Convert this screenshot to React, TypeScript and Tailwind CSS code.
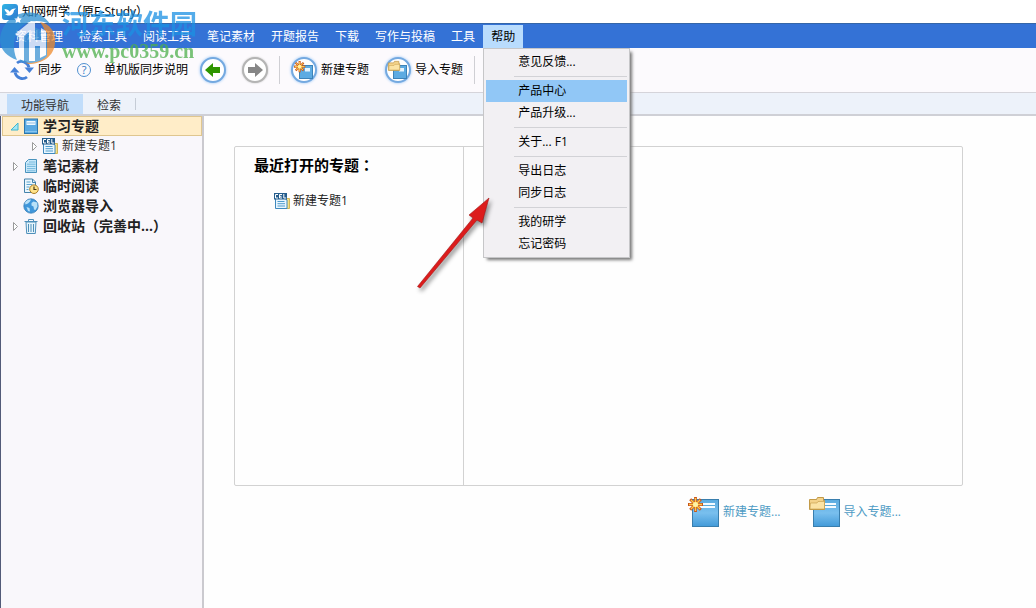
import { useState } from "react";
import type { ReactNode } from "react";

type MenuEntry = { label: string } | "separator";

const MENUS = ["资料管理", "检索工具", "阅读工具", "笔记素材", "开题报告", "下载", "写作与投稿", "工具"];

const HELP_MENU: MenuEntry[] = [
  { label: "意见反馈..." },
  "separator",
  { label: "产品中心" },
  { label: "产品升级..." },
  "separator",
  { label: "关于... F1" },
  "separator",
  { label: "导出日志" },
  { label: "同步日志" },
  "separator",
  { label: "我的研学" },
  { label: "忘记密码" },
];

function AppIcon() {
  return (
    <svg width="16" height="16" viewBox="0 0 16 16" aria-hidden="true">
      <defs>
        <linearGradient id="app-icon" x2="1" y2="1">
          <stop stopColor="#2fb5e4" />
          <stop offset="1" stopColor="#2f74d0" />
        </linearGradient>
      </defs>
      <rect width="16" height="16" rx="3" fill="url(#app-icon)" />
      <path d="M2.500 5c2.500.2 4 1 5.200 2.700C9 5.200 11 4.300 14 4.500l-2 1.700c-.3 3.500-2.500 5.300-5 5.300-1.800 0-3-.6-4-1.500 1.200 0 2-.2 2.500-.8C4 8.500 3 7 2.500 5z" fill="#fff" />
    </svg>
  );
}

function SyncIcon() {
  return (
    <svg width="24" height="22" viewBox="0 0 24 22" aria-hidden="true">
      <g fill="none" stroke="#4580d8" strokeWidth="2.800">
        <path d="M7 4C11 .8 17.500 2.500 19 8.500" />
        <path d="M17 18C13 21.200 6.500 19.500 5 13.500" />
      </g>
      <path d="M14.500 8.500h9.500L19.500 14z" fill="#4580d8" />
      <path d="M0 13.500h9.500L4.500 8z" fill="#4580d8" />
    </svg>
  );
}

function ArrowIcon({ back }: { back?: boolean }) {
  return (
    <svg width="16" height="14" viewBox="0 0 16 14" aria-hidden="true">
      {back ? (
        <path d="M0 7l8-7v4h7v6H8v4z" fill="#2e9500" />
      ) : (
        <path d="M16 7L8 0v4H1v6h7v4z" fill="#868686" />
      )}
    </svg>
  );
}

function BookIcon() {
  return (
    <svg width="16" height="16" viewBox="0 0 16 16" aria-hidden="true">
      <rect x="1.500" y="1" width="13" height="14.500" fill="#5aa9e2" stroke="#2d77ad" />
      <rect x="3.500" y="3" width="9" height="4" fill="#eef8ff" />
      <path d="M4 5h8" stroke="#6aa8d6" strokeWidth=".7" />
      <path d="M2 13.500h12" stroke="#9ed2f5" strokeWidth=".7" />
    </svg>
  );
}

function Spark() {
  return (
    <g>
      <path d="M7.500 0v15M0 7.500h15M2.200 2.200l10.600 10.600M12.800 2.200L2.200 12.800" stroke="#c8551c" strokeWidth="2.800" />
      <path d="M7.500 1v13M1 7.500h13M3 3l9 9M12 3l-9 9" stroke="#ffc94a" strokeWidth="1.400" />
      <circle cx="7.500" cy="7.500" r="2.500" fill="#fff3a5" />
    </g>
  );
}

function Folder() {
  return (
    <g stroke="#c39a48">
      <path d="M.5 2.500h7l1-2h6v3h1v9H.5z" fill="#f3d28a" />
      <path d="M1 12l.5-6h6.500l1-1.500h6.500V12z" fill="#fbe3a4" strokeWidth=".6" />
    </g>
  );
}

function TopicIcon({ kind }: { kind: "new" | "import" }) {
  return (
    <svg width="32" height="32" viewBox="0 0 32 32" aria-hidden="true">
      <defs>
        <linearGradient id={`cover-${kind}`} x2="0" y2="1">
          <stop stopColor="#5babdf" />
          <stop offset=".5" stopColor="#79bfee" />
          <stop offset="1" stopColor="#429ad8" />
        </linearGradient>
      </defs>
      <rect x="4.500" y="3.500" width="26" height="27" fill={`url(#cover-${kind})`} stroke="#397ead" />
      <rect x="9" y="7" width="18" height="5" fill="#f5fbff" />
      <path d="M9 9.500h18" stroke="#5da9d7" />
      <g transform="translate(0 1)">{kind === "new" ? <Spark /> : <Folder />}</g>
    </svg>
  );
}

// compact variant for the round toolbar buttons
function SmallTopicIcon({ kind }: { kind: "new" | "import" }) {
  return (
    <svg width="22" height="20" viewBox="0 0 22 20" className="shrink-0" aria-hidden="true">
      <rect x="6.500" y="5.500" width="13" height="13" fill="#5dabe2" stroke="#3d83b8" />
      <rect x="12" y="8" width="5" height="3.500" fill="#e6f4fd" />
      <g transform="translate(1 1) scale(.75)">{kind === "new" ? <Spark /> : <Folder />}</g>
    </svg>
  );
}

function CelIcon() {
  return (
    <svg width="16" height="16" viewBox="0 0 16 16" aria-hidden="true">
      <path d="M13 5.500h2.500v10H12" fill="#f5df85" stroke="#c9a83e" strokeWidth=".8" />
      <path d="M1.500 5h9l2.500 2v8.500H1.500z" fill="#e9f6ff" stroke="#3f89bd" />
      <path d="M3.500 8.500h7M3.500 10.700h7.500M3.500 13h7.500" stroke="#4f9ccc" />
      <rect width="13" height="6.500" fill="#255d8c" />
      <path d="M4 1.500H1.500v3.500H4M8 1.500H5.500v3.500H8M5.500 3.300h2M9.800 1v4h2.400" fill="none" stroke="#fff" />
    </svg>
  );
}

function NotesIcon() {
  return (
    <svg width="16" height="16" viewBox="0 0 16 16" aria-hidden="true">
      <path d="M5.500 1.500h8v13h-11v-10z" fill="#c9e8fa" stroke="#4a93bd" />
      <path d="M6 4h6.500M4 6.200h8.500M4 8.400h8.500M4 10.600h8.500M4 12.800h8.500" stroke="#74b8dd" />
    </svg>
  );
}

function ReadingIcon() {
  return (
    <svg width="16" height="16" viewBox="0 0 16 16" aria-hidden="true">
      <path d="M1.500 1h8l3 3v10.500h-11z" fill="#eaf6fd" stroke="#4583ab" />
      <path d="M9.500 1v3.500H13" fill="none" stroke="#4583ab" />
      <path d="M3.500 4h4M3.500 6.500h6M3.500 9h3M3.500 11.500h2" stroke="#5da5cf" />
      <circle cx="11" cy="11.200" r="4.300" fill="#ffe38a" stroke="#ac7d25" />
      <path d="M11 8.500v3h2.500" fill="none" stroke="#4b3a18" strokeWidth="1.200" />
    </svg>
  );
}

function GlobeIcon() {
  return (
    <svg width="16" height="16" viewBox="0 0 16 16" aria-hidden="true">
      <circle cx="8" cy="8" r="7.200" fill="#3f96da" stroke="#3a80b8" strokeWidth=".8" />
      <path d="M2 4.500C3.500 2 6 1.200 8 1.500L7 3.500 5 5.500 2.500 6.500zM8.500 5l2-1.500 3.500 1 .5 4-2 3.500-1.500-.5-.5-3-2-1zM3.500 9l3 1 .5 3.500-2-.5z" fill="#b9e1f8" />
    </svg>
  );
}

function BinIcon() {
  return (
    <svg width="16" height="16" viewBox="0 0 16 16" fill="none" stroke="#4f90ba" aria-hidden="true">
      <path d="M1.500 3.500h13M5.500 3V1.500h5V3" />
      <path d="M3 4l.7 11.500h8.600L13 4z" fill="#e6f4fb" />
      <path d="M5.500 6v8M8 6v8M10.500 6v8" />
    </svg>
  );
}

function RoundIcon({ gray, children }: { gray?: boolean; children: ReactNode }) {
  return (
    <span
      className={`flex size-[26px] shrink-0 items-center justify-center rounded-full border-2 bg-white ${
        gray ? "border-[#b4b4b4] shadow-[0_0_2px_#bbbbbb]" : "border-[#74a9e0] shadow-[0_0_3px_#8fc0f5]"
      }`}
    >
      {children}
    </span>
  );
}

function Divider() {
  return <span className="h-7 w-px bg-[#cfcfd4]" />;
}

function TitleBar() {
  return (
    <header className="flex h-6 items-center gap-1 border-b border-[#3566a8] bg-white pt-px pl-0.5">
      <AppIcon />
      <h1>知网研学（原E-Study）</h1>
    </header>
  );
}

function HelpMenu() {
  return (
    <div
      role="menu"
      className="absolute top-full left-0 z-20 w-[147px] border border-[#c6c6c8] bg-[#f2f0f3] p-0.5 text-black shadow-[3px_3px_3px_-1px_#777777]"
    >
      {HELP_MENU.map((entry, i) =>
        entry === "separator" ? (
          <hr key={i} className="my-[3px] ml-7 border-[#d2d2d6]" />
        ) : (
          <button
            key={entry.label}
            type="button"
            role="menuitem"
            className={`block h-[22px] w-full pl-8 text-left ${entry.label === "产品中心" ? "bg-[#91c7f6]" : ""}`}
          >
            {entry.label}
          </button>
        ),
      )}
    </div>
  );
}

function MenuBar() {
  const [open, setOpen] = useState(true);

  return (
    <nav className="flex h-6 items-stretch bg-[#3472d6] pl-[7px] text-white">
      {MENUS.map((label) => (
        <button key={label} type="button" className="px-2 pt-px">
          {label}
        </button>
      ))}
      <div className="relative flex pt-px">
        <button
          type="button"
          aria-expanded={open}
          onClick={() => setOpen(!open)}
          className="bg-[#b9dcfd] px-2 text-black"
        >
          帮助
        </button>
        {open && <HelpMenu />}
      </div>
    </nav>
  );
}

function ToolBar() {
  return (
    <div className="flex h-[45px] items-center border-b border-[#d5d4da] bg-[#fcfafd] pl-2.5">
      <button type="button" className="flex items-center gap-1">
        <SyncIcon />
        同步
      </button>
      <button type="button" className="ml-[15px] flex items-center gap-[13px]">
        <span className="flex size-[14px] items-center justify-center rounded-full border border-[#4f8fd0] text-[11px] text-[#2f78c4]">
          ?
        </span>
        单机版同步说明
      </button>
      <button type="button" aria-label="后退" className="ml-3">
        <RoundIcon>
          <ArrowIcon back />
        </RoundIcon>
      </button>
      <button type="button" aria-label="前进" className="mr-[11px] ml-4">
        <RoundIcon gray>
          <ArrowIcon />
        </RoundIcon>
      </button>
      <Divider />
      <button type="button" className="ml-[11px] flex items-center gap-1">
        <RoundIcon>
          <SmallTopicIcon kind="new" />
        </RoundIcon>
        新建专题
      </button>
      <button type="button" className="mr-[11px] ml-4 flex items-center gap-1">
        <RoundIcon>
          <SmallTopicIcon kind="import" />
        </RoundIcon>
        导入专题
      </button>
      <Divider />
    </div>
  );
}

function TabBar() {
  return (
    <div role="tablist" className="flex h-[23px] items-stretch border-b-2 border-[#cfd0d6] bg-[#edf2fa] pt-px pl-[7px] text-[#333333]">
      <button type="button" role="tab" aria-selected="true" className="bg-[#c1ddfa] px-3.5 pt-1">
        功能导航
      </button>
      <button type="button" role="tab" aria-selected="false" className="px-3.5 pt-1">
        检索
      </button>
      <span className="my-1 w-px bg-[#c5ccd6]" />
    </div>
  );
}

function TreeRow({
  icon,
  label,
  arrow,
  selected,
  child,
}: {
  icon: ReactNode;
  label: string;
  arrow?: "open" | "closed";
  selected?: boolean;
  child?: boolean;
}) {
  return (
    <li
      role="treeitem"
      aria-selected={!!selected}
      className={`flex h-5 items-center gap-1 border ${
        selected ? "border-[#dfc68f] bg-[#ffedc8]" : "border-transparent"
      } ${child ? "pl-[26px] text-xs text-[#333333]" : "pl-[7px] text-sm font-bold text-[#222222]"}`}
    >
      <svg width="9" height="9" viewBox="0 0 9 9" aria-hidden="true">
        {arrow === "open" && <path d="M8 1v7H1z" fill="#a4e6f3" stroke="#3fb6cf" />}
        {arrow === "closed" && <path d="M3.500.5l4 4-4 4z" fill="#fff" stroke="#9a9a9a" />}
      </svg>
      {icon}
      <span>{label}</span>
    </li>
  );
}

function Sidebar() {
  return (
    <aside className="w-[204px] shrink-0 border-r-2 border-l border-r-[#cbcacf] border-l-[#525a78] bg-[#f9f7fb]">
      <ul role="tree" className="pl-px">
        <TreeRow icon={<BookIcon />} label="学习专题" arrow="open" selected />
        <TreeRow icon={<CelIcon />} label="新建专题1" arrow="closed" child />
        <TreeRow icon={<NotesIcon />} label="笔记素材" arrow="closed" />
        <TreeRow icon={<ReadingIcon />} label="临时阅读" />
        <TreeRow icon={<GlobeIcon />} label="浏览器导入" />
        <TreeRow icon={<BinIcon />} label="回收站（完善中...）" arrow="closed" />
      </ul>
    </aside>
  );
}

function StartPage() {
  return (
    <main className="flex-1 bg-[#fefefe] pt-[30px] pr-[73px] pl-[30px]">
      <div className="flex min-h-[340px] rounded-xs border border-[#d2d2d2]">
        <section className="w-[229px] border-r border-[#d2d2d2] pt-2 pl-[19px]">
          <h2 className="text-[15px] leading-5 font-bold text-black">
            最近打开的专题<span className="font-['Noto_Sans_CJK_TC',sans-serif]">：</span>
          </h2>
          <a href="#topic" className="mt-[18px] ml-5 flex items-center gap-[3px] text-[#222222]">
            <CelIcon />
            新建专题1
          </a>
        </section>
      </div>
      <div className="mt-2.5 flex justify-end gap-7 pr-[62px] text-[#4d9bc4]">
        <a href="#new" className="flex items-center gap-[3px]">
          <TopicIcon kind="new" />
          新建专题...
        </a>
        <a href="#import" className="flex items-center gap-[3px]">
          <TopicIcon kind="import" />
          导入专题...
        </a>
      </div>
    </main>
  );
}

function Watermark() {
  return (
    <div className="pointer-events-none absolute top-2 left-0 z-10 flex opacity-75">
      <svg width="60" height="58" viewBox="0 8 60 58" aria-hidden="true">
        <path d="M40 22c10 2 16 10 15 21C54 56 43 64 28 64l-3-2c13-2 21-9 21-21 0-8-2-14-6-19z" fill="#ee8a2c" />
        <path d="M0 40C1 22 16 10 34 13c7 1 12 5 16 11-11-5-22-4-29 3-8 8-9 22-4 33C8 57 0 50 0 40z" fill="#2c8fd2" />
        <path d="M18 34l14-8 15 7v23c-4 4-9 6-16 7l-11-1z" fill="#3f95d3" />
        <path d="M15 34l16-13 4 1v18h6V28l5 3v24l-6 3V46h-5v15h-6V32l-5 4v25l-5-2V37z" fill="#fff" />
        <path d="M18 16l1.300 2.300 2.400.3-1.700 1.800.4 2.600-2.400-1.200-2.400 1.200.4-2.600-1.700-1.800 2.400-.3z" fill="#fff" />
      </svg>
      <div className="pl-0.5 font-bold">
        <p className="text-[27px] leading-8 text-[#1b91e3]">河东软件园</p>
        <p className="pt-px font-['Liberation_Serif',serif] text-[20px] leading-5 text-[#4eb04c]">www.pc0359.cn</p>
      </div>
    </div>
  );
}

function PointerArrow() {
  return (
    <svg
      className="pointer-events-none absolute top-[196px] left-[414px] z-30 drop-shadow-[2px_3px_2px_#00000070]"
      width="78"
      height="96"
      viewBox="414 196 78 96"
      aria-hidden="true"
    >
      <path d="M417.500 286.500L473 218l-4-3 20-17-7 25-5-3-57 68z" fill="#dc1c1c" stroke="#a31515" strokeWidth=".6" />
    </svg>
  );
}

export default function App() {
  return (
    <div className="relative flex min-h-screen flex-col bg-white font-['Open_Sans','Noto_Sans_CJK_SC',sans-serif] text-xs whitespace-nowrap text-black">
      <TitleBar />
      <MenuBar />
      <ToolBar />
      <TabBar />
      <div className="flex flex-1">
        <Sidebar />
        <StartPage />
      </div>
      <Watermark />
      <PointerArrow />
    </div>
  );
}
